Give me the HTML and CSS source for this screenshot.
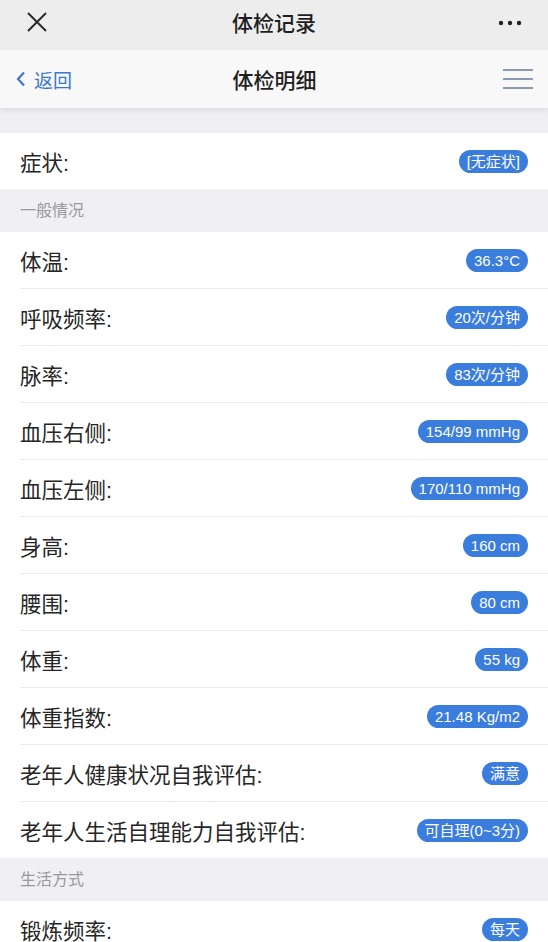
FILE: index.html
```html
<!DOCTYPE html>
<html lang="zh-CN">
<head>
  <meta charset="UTF-8">
  <meta name="viewport" content="width=device-width, initial-scale=1.0">
  <title>体检记录</title>
  <link rel="stylesheet" href="styles.css">
</head>
<body>
  <header class="topbar">
    <span class="close-icon">
      <svg width="22" height="22" viewBox="0 0 22 22"><path d="M2 2 L20 20 M20 2 L2 20" stroke="#2b2b2b" stroke-width="2" fill="none"/></svg>
    </span>
    <span class="topbar-title">体检记录</span>
    <span class="more-icon">
      <svg width="24" height="6" viewBox="0 0 24 6"><circle cx="3" cy="3" r="2.2" fill="#222"/><circle cx="12" cy="3" r="2.2" fill="#222"/><circle cx="21" cy="3" r="2.2" fill="#222"/></svg>
    </span>
  </header>

  <nav class="navbar">
    <a class="back-link" href="#">
      <svg width="10" height="16" viewBox="0 0 10 16"><path d="M8 1.5 L2 8 L8 14.5" stroke="#3a78d0" stroke-width="2.2" fill="none"/></svg>
      返回
    </a>
    <span class="navbar-title">体检明细</span>
    <span class="menu-icon">
      <svg width="30" height="22" viewBox="0 0 30 22"><path d="M0 2 H30 M0 11 H30 M0 20 H30" stroke="#8a9ab0" stroke-width="1.8" fill="none"/></svg>
    </span>
  </nav>

  <div class="gap"></div>

  <div class="group">
    <div class="row"><span class="label">症状:</span><span class="badge">[无症状]</span></div>
  </div>

  <div class="section-title">一般情况</div>
  <div class="group">
    <div class="row"><span class="label">体温:</span><span class="badge">36.3°C</span></div>
    <div class="row"><span class="label">呼吸频率:</span><span class="badge">20次/分钟</span></div>
    <div class="row"><span class="label">脉率:</span><span class="badge">83次/分钟</span></div>
    <div class="row"><span class="label">血压右侧:</span><span class="badge">154/99 mmHg</span></div>
    <div class="row"><span class="label">血压左侧:</span><span class="badge">170/110 mmHg</span></div>
    <div class="row"><span class="label">身高:</span><span class="badge">160 cm</span></div>
    <div class="row"><span class="label">腰围:</span><span class="badge">80 cm</span></div>
    <div class="row"><span class="label">体重:</span><span class="badge">55 kg</span></div>
    <div class="row"><span class="label">体重指数:</span><span class="badge">21.48 Kg/m2</span></div>
    <div class="row"><span class="label">老年人健康状况自我评估:</span><span class="badge">满意</span></div>
    <div class="row"><span class="label">老年人生活自理能力自我评估:</span><span class="badge">可自理(0~3分)</span></div>
  </div>

  <div class="section-title">生活方式</div>
  <div class="group">
    <div class="row"><span class="label">锻炼频率:</span><span class="badge">每天</span></div>
  </div>
</body>
</html>
```

FILE: styles.css
```css
body {
  margin: 0;
  padding: 0;
  font-family: "Liberation Sans", "Noto Sans CJK SC", sans-serif;
  background-color: #efeff4;
  color: #2a2a2a;
}
.topbar {
  height: 50px;
  background-color: #ededed;
  display: flex;
  align-items: center;
  justify-content: space-between;
  padding: 0 26px 6px 26px;
  box-sizing: border-box;
}
.close-icon {
  width: 70px;
  display: flex;
}
.topbar-title {
  font-size: 21px;
  font-weight: 500;
  color: #1f1f1f;
}
.more-icon {
  width: 70px;
  display: flex;
  justify-content: flex-end;
  padding-top: 2px;
}
.navbar {
  height: 58px;
  background-color: #f8f8f8;
  display: flex;
  align-items: center;
  justify-content: space-between;
  padding: 0 14px 0 16px;
  box-shadow: 0 3px 5px rgba(0, 0, 0, 0.08);
  position: relative;
}
.back-link {
  width: 90px;
  display: flex;
  align-items: center;
  gap: 8px;
  color: #3a78d0;
  font-size: 19px;
  text-decoration: none;
}
.navbar-title {
  font-size: 21px;
  font-weight: 500;
  color: #1f1f1f;
}
.menu-icon {
  width: 90px;
  display: flex;
  justify-content: flex-end;
  padding-right: 1px;
}
.gap {
  height: 25px;
}
.group {
  background-color: #ffffff;
  padding-left: 20px;
}
.row {
  height: 56px;
  display: flex;
  align-items: center;
  justify-content: space-between;
  padding-right: 20px;
  border-bottom: 1px solid #ebebeb;
}
.row:last-child {
  border-bottom: none;
}
.label {
  font-size: 21.5px;
  color: #262626;
}
.badge {
  background-color: #3b7ddd;
  color: #ffffff;
  font-size: 15px;
  height: 23px;
  line-height: 23px;
  padding: 0 8px;
  border-radius: 12px;
}
.section-title {
  height: 43px;
  line-height: 43px;
  padding-left: 20px;
  font-size: 16px;
  color: #9a9a9a;
  background-color: #efeff4;
}
```
